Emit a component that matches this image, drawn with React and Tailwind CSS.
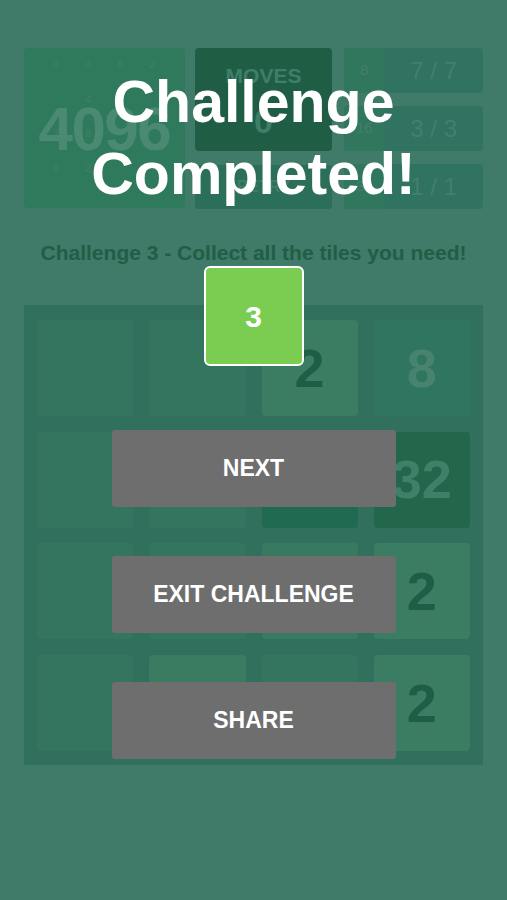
import React from 'react'

const font = { fontFamily: '"Liberation Sans", Arial, sans-serif' }

// board tiles, already shown through the dim overlay
const board = [
  [{ bg: 'bg-[#33755f]' }, { bg: 'bg-[#33755f]' }, { bg: 'bg-[#3b7d63]', n: '2', c: 'text-[#1f5e46]' }, { bg: 'bg-[#2f7560]', n: '8', c: 'text-[#47836e]' }],
  [{ bg: 'bg-[#33755f]' }, { bg: 'bg-[#33755f]' }, { bg: 'bg-[#206a52]' }, { bg: 'bg-[#22664b]', n: '32', c: 'text-[#3f8168]' }],
  [{ bg: 'bg-[#33755f]' }, { bg: 'bg-[#33755f]' }, { bg: 'bg-[#377a61]' }, { bg: 'bg-[#3b7d63]', n: '2', c: 'text-[#1f5e46]' }],
  [{ bg: 'bg-[#33755f]' }, { bg: 'bg-[#3a7c62]' }, { bg: 'bg-[#33755f]' }, { bg: 'bg-[#3b7d63]', n: '2', c: 'text-[#1f5e46]' }],
]

const mini = ['4', '4', '8', '2', '', '4', '', '', '2', '8', '', '', '8', '2', '', '']

const goals = [
  { tile: '8', count: '7 / 7' },
  { tile: '16', count: '3 / 3' },
  { tile: '32', count: '1 / 1' },
]

function Board() {
  return (
    <div className="mx-6 mt-[40px] px-[13px] pt-[15px] pb-[14px] bg-[#30705c] grid grid-cols-4 gap-x-4 gap-y-[15.7px]">
      {board.flat().map((t, i) => (
        <div key={i} className={`h-[96px] rounded-[4px] flex items-center justify-center ${t.bg}`}>
          {t.n && <span className={`text-[54px] font-bold ${t.c}`}>{t.n}</span>}
        </div>
      ))}
    </div>
  )
}

export default function App() {
  return (
    <div className="relative w-[507px] h-[900px] bg-[#407a68] overflow-hidden" style={font}>
      {/* game underneath */}
      <div className="flex gap-[10px] px-6 pt-12">
        <div className="relative w-[161px] h-[160px] rounded-[4px] bg-[#2f795c] p-2">
          <div className="grid grid-cols-4 gap-y-[18px] text-[11px] font-bold text-[#3b7f64] px-2">
            {mini.map((m, i) => (
              <span key={i} className="text-center">{m}</span>
            ))}
          </div>
          <div className="absolute inset-0 flex items-center justify-center text-[62px] font-bold text-[#4a8a72] tracking-tight">
            4096
          </div>
        </div>
        <div className="flex flex-col gap-[14px] w-[138px]">
          <div className="h-[103px] rounded-[4px] bg-[#1f5e45] flex flex-col items-center pt-3">
            <span className="text-[21px] font-bold text-[#3e7f69]">MOVES</span>
            <span className="text-[34px] font-bold text-[#3e7f69] mt-1">0</span>
          </div>
          <div className="h-[44px] rounded-[4px] bg-[#2b6e59] flex items-center justify-center text-[16px] font-bold text-[#3f7f69]">
            RETRY
          </div>
        </div>
        <div className="flex flex-col gap-[13px] w-[139px] ml-[2px]">
          {goals.map((g) => (
            <div key={g.tile} className="h-[45px] rounded-[4px] bg-[#2f7360] flex items-center overflow-hidden">
              <div className="w-[40px] h-full bg-[#30775e] flex items-center justify-center text-[15px] text-[#447f6c]">{g.tile}</div>
              <div className="flex-1 text-center text-[24px] text-[#447f6c]">{g.count}</div>
            </div>
          ))}
        </div>
      </div>

      <p className="mt-[32px] text-center text-[21px] leading-[24px] font-bold text-[#1f5e47]">
        Challenge 3 - Collect all the tiles you need!
      </p>

      <Board />

      {/* completion overlay */}
      <div className="absolute inset-0 flex flex-col items-center pt-[66px]">
        <h1 className="text-[59px] leading-[72px] font-bold text-white text-center">
          Challenge
          <br />
          Completed!
        </h1>
        <div className="mt-[56px] w-[100px] h-[100px] rounded-[6px] border-2 border-white bg-[#7bcd52] flex items-center justify-center text-[30px] font-bold text-white">
          3
        </div>
        <div className="mt-[64px] flex flex-col gap-[49px]">
          {['NEXT', 'EXIT CHALLENGE', 'SHARE'].map((b) => (
            <button key={b} className="w-[284px] h-[77px] rounded-[3px] bg-[#6e6e6e] text-white text-[23px] font-bold">
              {b}
            </button>
          ))}
        </div>
      </div>
    </div>
  )
}
